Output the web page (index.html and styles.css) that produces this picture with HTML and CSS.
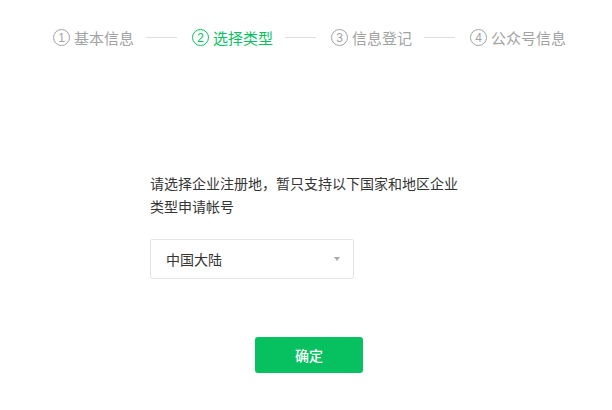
FILE: index.html
```html
<!DOCTYPE html>
<html lang="zh-CN">
<head>
<meta charset="utf-8">
<title>选择类型</title>
<link rel="stylesheet" href="styles.css">
</head>
<body>
<div class="steps">
  <div class="step"><span class="num">1</span><span class="label">基本信息</span></div>
  <span class="line"></span>
  <div class="step active"><span class="num">2</span><span class="label">选择类型</span></div>
  <span class="line"></span>
  <div class="step"><span class="num">3</span><span class="label">信息登记</span></div>
  <span class="line"></span>
  <div class="step"><span class="num">4</span><span class="label">公众号信息</span></div>
</div>
<div class="content">
  <p class="tip">请选择企业注册地，暂只支持以下国家和地区企业类型申请帐号</p>
  <div class="select">
    <span class="select-value">中国大陆</span>
    <span class="arrow"></span>
  </div>
</div>
<div class="actions">
  <button class="btn">确定</button>
</div>
</body>
</html>
```
FILE: styles.css
```css
html, body {
  margin: 0;
  padding: 0;
  background: #ffffff;
}
body {
  font-family: "Noto Sans CJK SC", "Noto Sans", sans-serif;
  color: #353535;
}
.steps {
  display: flex;
  align-items: center;
  padding: 29px 0 0 53px;
  height: 17px;
}
.step {
  display: flex;
  align-items: center;
  gap: 4px;
  color: #a3a3a3;
  font-size: 15px;
  line-height: 17px;
}
.step.active {
  color: #07c160;
}
.num {
  box-sizing: border-box;
  width: 17px;
  height: 17px;
  border: 1.2px solid currentColor;
  border-radius: 50%;
  display: flex;
  align-items: center;
  justify-content: center;
  font-family: "Liberation Sans", sans-serif;
  font-size: 12px;
  line-height: 1;
}
.line {
  width: 31px;
  height: 1px;
  background: #dedede;
  margin: 0 15px 0 12px;
}
.content {
  padding-left: 150px;
  margin-top: 126px;
}
.tip {
  margin: 0;
  width: 318px;
  font-size: 14px;
  line-height: 23px;
  color: #353535;
}
.select {
  box-sizing: border-box;
  margin-top: 21px;
  width: 204px;
  height: 40px;
  border: 1px solid #e4e4e4;
  border-radius: 2px;
  display: flex;
  align-items: center;
  justify-content: space-between;
  padding: 0 13px 0 15px;
  font-size: 14px;
  color: #353535;
}
.arrow {
  width: 0;
  height: 0;
  border-left: 3.5px solid transparent;
  border-right: 3.5px solid transparent;
  border-top: 4px solid #a8a8a8;
}
.actions {
  padding-left: 255px;
  margin-top: 58px;
}
.btn {
  width: 108px;
  height: 36px;
  border: 0;
  border-radius: 3px;
  background: #07c160;
  color: #ffffff;
  font-family: "Noto Sans CJK SC", sans-serif;
  font-size: 14px;
  font-weight: 500;
  padding: 0;
}
```
